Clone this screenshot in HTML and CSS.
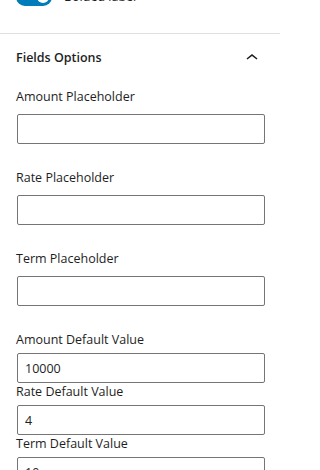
FILE: index.html
```html
<!DOCTYPE html>
<html lang="en">
<head>
<meta charset="utf-8">
<title>Fields Options</title>
<link rel="stylesheet" href="styles.css">
</head>
<body>
<div class="sidebar">
  <div class="top-panel">
    <div class="toggle-row">
      <span class="toggle"><span class="knob"></span></span>
      <span class="toggle-label">Bolded label</span>
    </div>
  </div>
  <section class="panel">
    <div class="panel-header">
      <h2 class="panel-title">Fields Options</h2>
      <svg class="chevron" width="24" height="24" viewBox="0 0 24 24" aria-hidden="true"><path d="M6.5 12.4L12 8l5.5 4.4-.9 1.2L12 10l-4.6 3.6-.9-1.2z"/></svg>
    </div>
    <div class="panel-body">
      <div class="field">
        <label class="field-label">Amount Placeholder</label>
        <input class="field-input" type="text" value="">
      </div>
      <div class="field">
        <label class="field-label">Rate Placeholder</label>
        <input class="field-input" type="text" value="">
      </div>
      <div class="field">
        <label class="field-label">Term Placeholder</label>
        <input class="field-input" type="text" value="">
      </div>
      <div class="field field-compact">
        <label class="field-label">Amount Default Value</label>
        <input class="field-input" type="text" value="10000">
      </div>
      <div class="field field-compact">
        <label class="field-label">Rate Default Value</label>
        <input class="field-input" type="text" value="4">
      </div>
      <div class="field field-compact">
        <label class="field-label">Term Default Value</label>
        <input class="field-input" type="text" value="10">
      </div>
    </div>
  </section>
</div>
</body>
</html>
```

FILE: styles.css
```css
html, body {
  margin: 0;
  padding: 0;
  background: #ffffff;
}
body {
  font-family: "Open Sans", "Noto Sans", sans-serif;
  font-size: 12.5px;
  line-height: 18px;
  color: #1e1e1e;
  overflow: hidden;
}
.sidebar {
  width: 280px;
}
.top-panel {
  padding: 0 16px 27px;
  border-bottom: 1px solid #e0e0e0;
}
.toggle-row {
  display: flex;
  align-items: center;
  gap: 12px;
  margin-top: -12px;
}
.toggle {
  width: 36px;
  height: 18px;
  border-radius: 9px;
  background: #007cba;
  display: flex;
  align-items: center;
  justify-content: flex-end;
  padding: 0 3px;
  box-sizing: border-box;
  flex: none;
}
.knob {
  width: 12px;
  height: 12px;
  border-radius: 50%;
  background: #ffffff;
}
.toggle-label {
  font-size: 12.5px;
}
.panel-header {
  height: 48px;
  padding: 0 16px;
  display: flex;
  align-items: center;
  justify-content: space-between;
}
.panel-title {
  margin: 0;
  font-size: 12.5px;
  font-weight: 600;
  line-height: 18px;
}
.chevron {
  fill: #1e1e1e;
  display: block;
}
.panel-body {
  padding: 6px 16px 0;
}
.field {
  margin-bottom: 25px;
}
.field-label {
  display: block;
  margin-bottom: 8px;
}
.field-input {
  display: block;
  box-sizing: border-box;
  width: 248px;
  height: 30px;
  margin: 0 0 0 1px;
  padding: 0 7px;
  border: 1px solid #757575;
  border-radius: 2px;
  background: #ffffff;
  font-family: inherit;
  font-size: 12.5px;
  color: #1e1e1e;
}
.field-compact {
  margin-bottom: 0;
}
.field-compact .field-label {
  margin-bottom: 4px;
}
```
